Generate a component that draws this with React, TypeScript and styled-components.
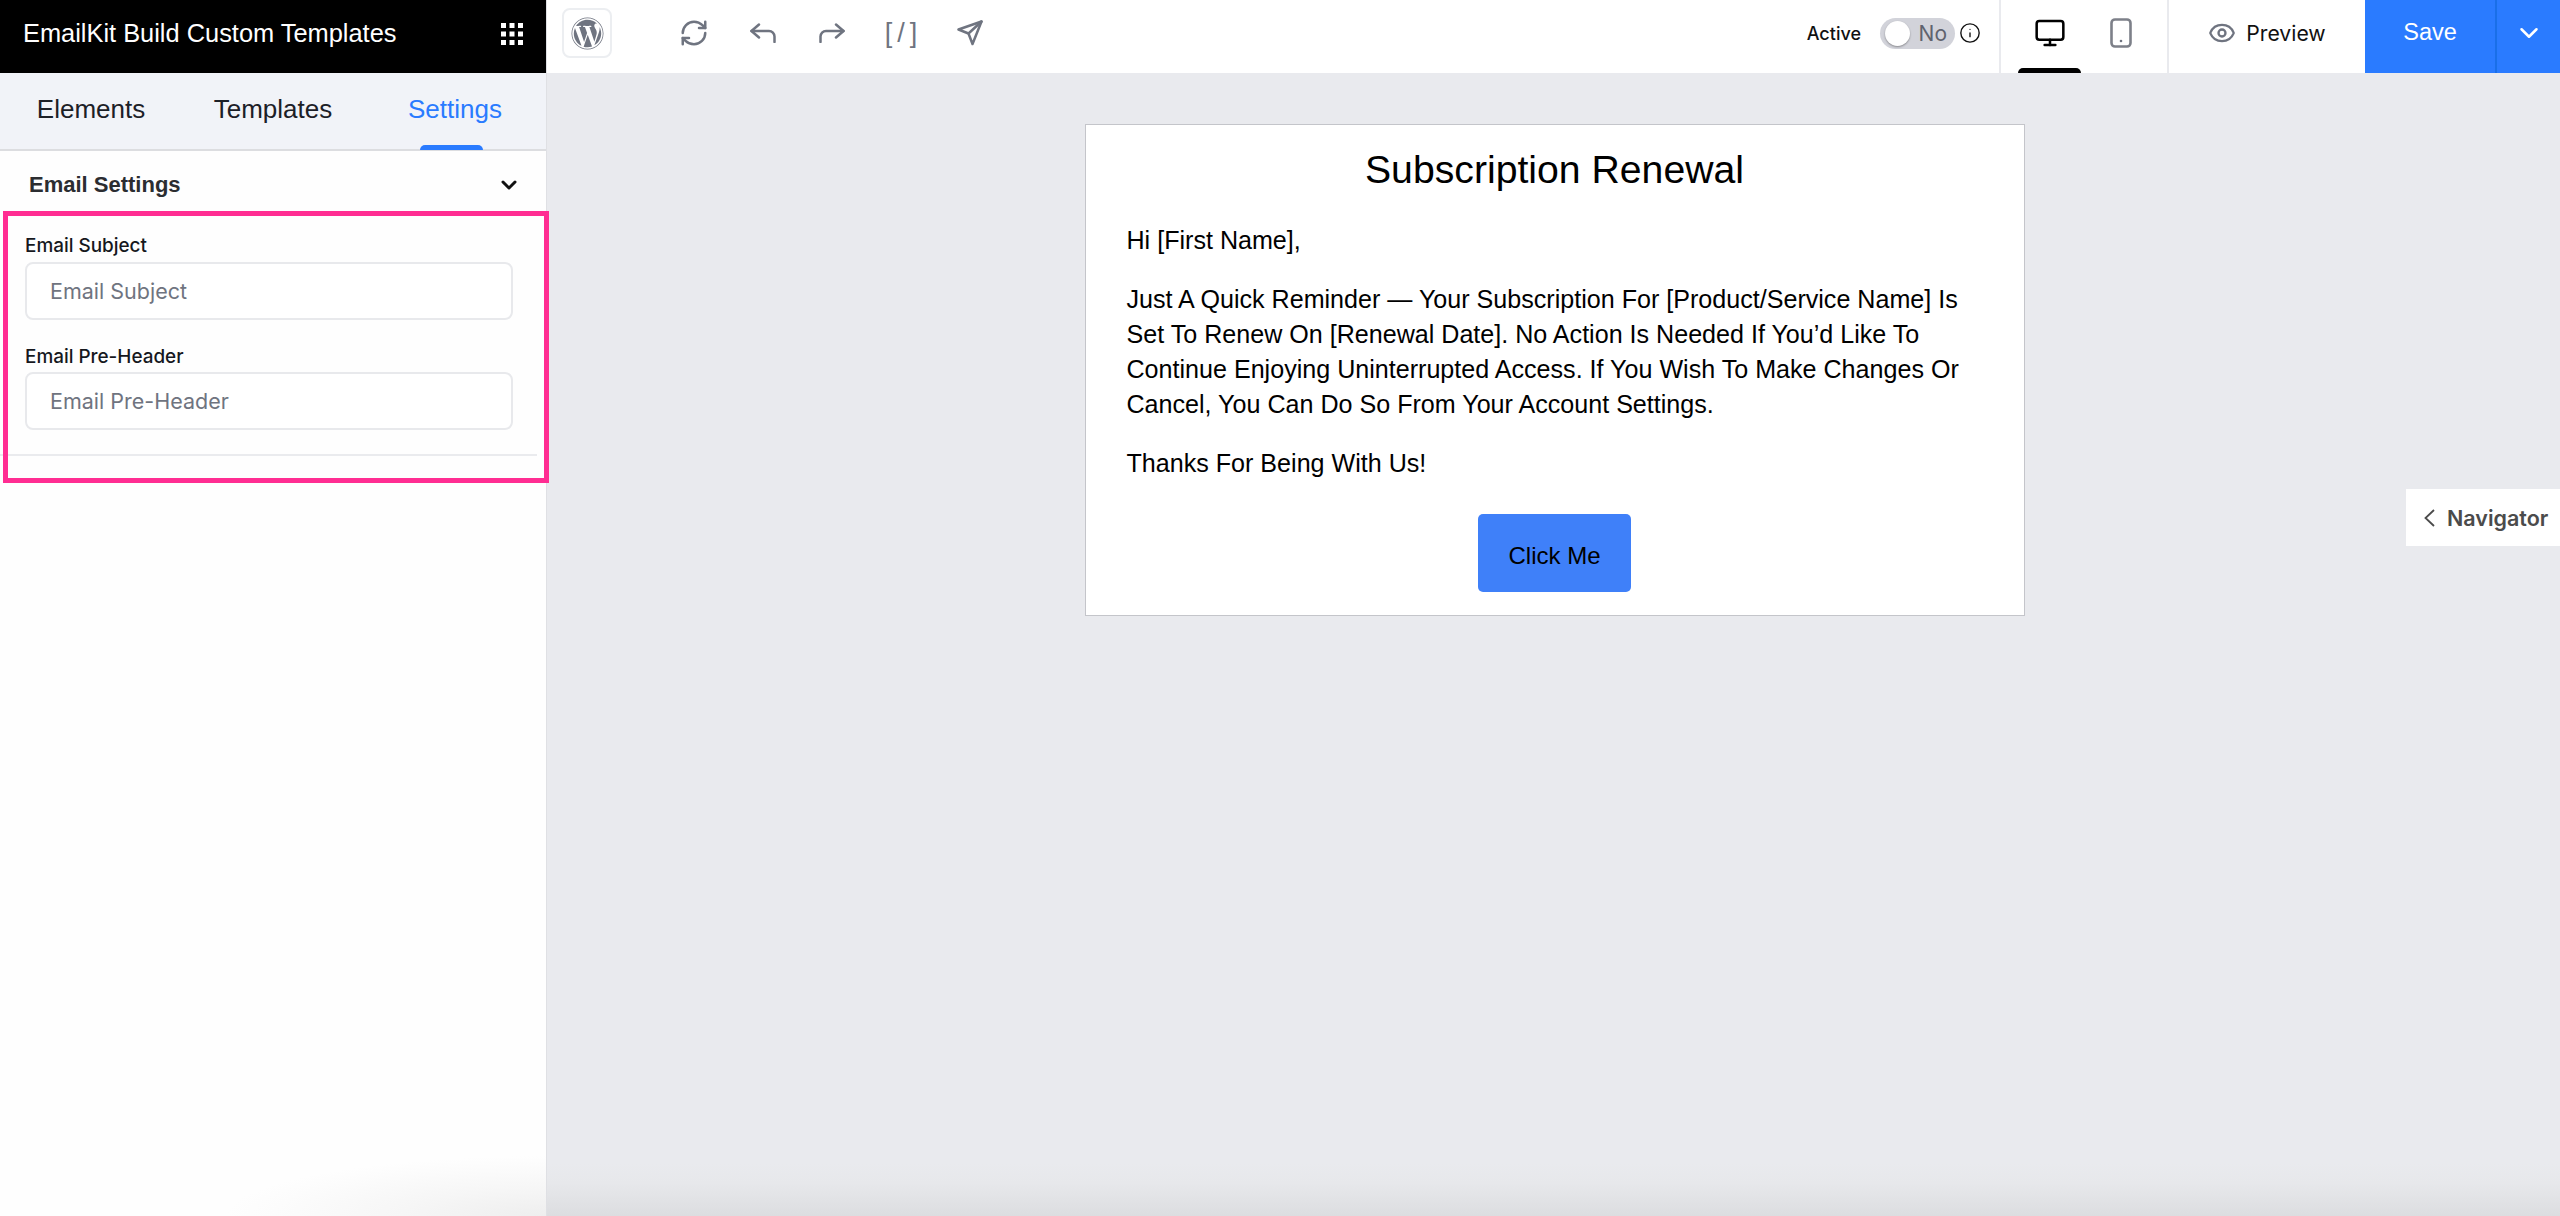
import styled, { createGlobalStyle } from "styled-components";
import { ChevronDown, Eye, Info, Monitor, RefreshCw } from "lucide-react";
import { FaWordpress } from "react-icons/fa";

const GlobalStyle = createGlobalStyle`
  html, body {
    margin: 0;
    padding: 0;
    height: 100%;
    background: #e9eaee;
  }
  * {
    box-sizing: border-box;
  }
`;

const helvetica = `"Liberation Sans", Arial, sans-serif`;
const inter = `Inter, "Liberation Sans", sans-serif`;

const Page = styled.div`
  display: flex;
  width: 2560px;
  height: 1216px;
  overflow: hidden;
  font-family: ${helvetica};
`;

const Sidebar = styled.aside`
  position: relative;
  flex: 0 0 546px;
  display: flex;
  flex-direction: column;
  border-right: 1px solid #dfe0e4;
  background: radial-gradient(
      ellipse 320px 60px at 100% 100%,
      #eeeeee 0%,
      #f6f6f6 45%,
      #fcfcfc 85%,
      #fefefe 100%
    ),
    #fefefe;
`;

const BrandBar = styled.div`
  flex: 0 0 73px;
  display: flex;
  align-items: center;
  justify-content: space-between;
  padding: 0 23px 6px 23px;
  background: #000;
  color: #fff;
  font-size: 25.4px;
`;

const Tabs = styled.nav`
  flex: 0 0 76px;
  display: flex;
  align-items: center;
  padding-bottom: 4px;
  background: #f1f3f8;
  border-bottom: 2px solid #dcdde0;
`;

const Tab = styled.div<{ $active?: boolean; $width: number }>`
  position: relative;
  flex: 0 0 ${(p) => p.$width}px;
  font-size: 26px;
  line-height: 72px;
  text-align: center;
  color: ${(p) => (p.$active ? "#2a7bff" : "#1c2027")};

  ${(p) =>
    p.$active &&
    `
    &::after {
      content: "";
      position: absolute;
      left: 50%;
      bottom: -5px;
      width: 63px;
      height: 5px;
      margin-left: -35px;
      border-radius: 5px 5px 0 0;
      background: #2a7bff;
    }
  `}
`;

const SectionHead = styled.div`
  flex: 0 0 63px;
  display: flex;
  align-items: center;
  justify-content: space-between;
  padding: 5px 25px 0 29px;
  font-size: 22px;
  font-weight: 700;
  color: #2b2d31;
`;

const SectionBody = styled.div`
  display: flex;
  flex-direction: column;
  width: 537px;
  padding: 21px 24px 24px 25px;
  border-bottom: 2px solid #eaebee;
`;

const FieldLabel = styled.label`
  margin-bottom: 4.5px;
  font-family: ${inter};
  font-size: 18.9px;
  font-weight: 500;
  line-height: 22px;
  color: #16181d;
`;

const FieldInput = styled.input<{ $gap?: boolean }>`
  width: 488px;
  height: 58px;
  padding: 0 23px;
  margin-bottom: ${(p) => (p.$gap ? "26px" : "0")};
  border: 2px solid #e8e9ec;
  border-radius: 8px;
  outline: none;
  background: #fff;
  font-family: ${inter};
  font-size: 21.5px;

  &::placeholder {
    color: #6f7480;
    opacity: 1;
  }
`;

// pink annotation drawn over the screenshot
const Highlight = styled.div`
  position: absolute;
  top: 211px;
  left: 3px;
  width: 546px;
  height: 272px;
  border: 5px solid #ff2d92;
  z-index: 2;
  pointer-events: none;
`;

const Workspace = styled.div`
  flex: 1;
  min-width: 0;
  display: flex;
  flex-direction: column;
`;

const TopBar = styled.header`
  flex: 0 0 73px;
  display: flex;
  align-items: stretch;
  justify-content: space-between;
  background: #fff;
  color: #6f7480;
`;

const LeftTools = styled.div`
  display: flex;
  align-items: center;
  padding: 0 0 0 15px;
`;

const LogoBox = styled.div`
  display: flex;
  align-items: center;
  justify-content: center;
  width: 50px;
  height: 50px;
  margin: 0 62px 7px 0;
  border: 2px solid #eceef1;
  border-radius: 8px;
`;

const ToolButton = styled.div`
  display: flex;
  align-items: center;
  justify-content: center;
  width: 40px;
  height: 40px;
  margin: 0 29px 7px 0;
`;

const ToolText = styled.span`
  font-family: ${helvetica};
  font-size: 27px;
  letter-spacing: 5px;
  margin-right: -5px;
  white-space: nowrap;
`;

const RightTools = styled.div`
  display: flex;
  align-items: stretch;
`;

const StatusGroup = styled.div`
  display: flex;
  align-items: center;
  padding: 0 18px 7px 0;
  font-family: ${inter};
  color: #111;
`;

const StatusLabel = styled.span`
  margin-right: 19px;
  font-size: 18px;
  font-weight: 500;
`;

const Toggle = styled.div`
  position: relative;
  display: flex;
  align-items: center;
  justify-content: flex-end;
  width: 75px;
  height: 31px;
  margin-right: 4px;
  padding-right: 8px;
  border-radius: 16px;
  background: #d2d3da;
  font-size: 21px;
  color: #60636e;

  &::before {
    content: "";
    position: absolute;
    top: 3px;
    left: 5px;
    width: 25px;
    height: 25px;
    border-radius: 50%;
    background: #fff;
    box-shadow: 0 1px 2px rgba(0, 0, 0, 0.35);
  }
`;

const DeviceGroup = styled.div`
  display: flex;
  gap: 8px;
  padding-left: 17px;
  width: 170px;
  border-left: 2px solid #e9eaee;
  border-right: 2px solid #e9eaee;
`;

const DeviceTab = styled.div<{ $active?: boolean }>`
  position: relative;
  display: flex;
  align-items: center;
  justify-content: center;
  width: 63px;
  padding-bottom: 7px;

  ${(p) =>
    p.$active &&
    `
    &::after {
      content: "";
      position: absolute;
      left: 0;
      bottom: 0;
      width: 63px;
      height: 5px;
      border-radius: 5px 5px 0 0;
      background: #000;
    }
  `}
`;

const PreviewButton = styled.div`
  display: flex;
  align-items: center;
  justify-content: center;
  gap: 10px;
  width: 196px;
  padding-bottom: 7px;
  font-family: ${inter};
  font-size: 21.2px;
  font-weight: 400;
  color: #111;
`;

const SaveButton = styled.div`
  display: flex;
  align-items: center;
  justify-content: center;
  width: 130px;
  padding-bottom: 8px;
  background: #2a7bff;
  color: #fff;
  font-size: 23.5px;
  font-weight: 500;
`;

const SaveMenu = styled.div`
  display: flex;
  align-items: center;
  justify-content: center;
  width: 65px;
  padding-bottom: 7px;
  background: #2a7bff;
  border-left: 2px solid #1a6fe8;
  color: #fff;
`;

const Canvas = styled.main`
  position: relative;
  flex: 1;
  display: flex;
  justify-content: center;
  align-items: flex-start;
  padding: 51px 0 0 2px;
  background: linear-gradient(to bottom, #e9eaee 1090px, #e7e8eb 1110px, #dcdde0 1143px);
`;

const EmailCard = styled.article`
  display: flex;
  flex-direction: column;
  width: 940px;
  height: 492px;
  padding: 19px 41px 0;
  background: #fff;
  border: 1px solid #c4c5ca;
  color: #000;
`;

const EmailTitle = styled.h1`
  margin: 0 0 27px;
  font-size: 39.2px;
  font-weight: 400;
  line-height: 52px;
  text-align: center;
`;

const EmailText = styled.p`
  margin: 0 0 24.5px;
  font-size: 25.1px;
  line-height: 34.8px;
`;

const EmailButton = styled.div`
  align-self: center;
  display: flex;
  align-items: center;
  justify-content: center;
  width: 153px;
  height: 78px;
  margin-top: 9px;
  padding-top: 6px;
  border-radius: 5px;
  background: #3f80f9;
  font-size: 24px;
`;

const NavigatorTab = styled.div`
  position: absolute;
  top: 416px;
  right: 0;
  display: flex;
  align-items: center;
  gap: 12px;
  width: 154px;
  height: 57px;
  padding-left: 17px;
  background: #fff;
  font-family: ${inter};
  font-size: 21.5px;
  font-weight: 600;
  color: #4b4b4b;
`;

const AppsIcon = () => (
  <svg width="22" height="22" viewBox="0 0 22 22" fill="#fff">
    {[0, 8.5, 17].map((y) =>
      [0, 8.5, 17].map((x) => (
        <rect key={`${x}-${y}`} x={x} y={y} width="5" height="5" />
      ))
    )}
  </svg>
);

const UndoIcon = ({ $flip }: { $flip?: boolean }) => (
  <svg width="26" height="20" viewBox="0 0 26 20" fill="none" stroke="#6f7480" strokeWidth="2.5" strokeLinecap="round" strokeLinejoin="round">
    <g transform={$flip ? "matrix(-1 0 0 1 26 0)" : undefined}>
      <path d="M9 1.5 1.5 8 9 14.5" />
      <path d="M1.5 8H19a5.5 5.5 0 0 1 5.5 5.5V19" />
    </g>
  </svg>
);

const SendIcon = () => (
  <svg width="26" height="26" viewBox="0 0 26 26" fill="none" stroke="#6f7480" strokeWidth="2.5" strokeLinejoin="round" strokeLinecap="round">
    <path d="M24.5 1.5 1.5 9.5l10 4 4 10.5z" />
    <path d="M11.5 13.5 24.5 1.5" />
  </svg>
);

const PhoneIcon = () => (
  <svg width="22" height="30" viewBox="0 0 22 30" fill="none">
    <rect x="1.5" y="1.5" width="19" height="27" rx="3.5" stroke="#7d8089" strokeWidth="2.6" />
    <circle cx="11" cy="23" r="1.3" fill="#6f7480" />
  </svg>
);

const SmallChevronLeft = () => (
  <svg width="12" height="18" viewBox="0 0 12 18" fill="none" stroke="#4b4b4b" strokeWidth="1.8">
    <path d="M11 1 2.5 9l8.5 8" />
  </svg>
);

export default function App() {
  return (
    <Page>
      <GlobalStyle />
      <Sidebar>
        <BrandBar>
          <span>EmailKit Build Custom Templates</span>
          <AppsIcon />
        </BrandBar>
        <Tabs>
          <Tab $width={182}>Elements</Tab>
          <Tab $width={182}>Templates</Tab>
          <Tab $width={182} $active>
            Settings
          </Tab>
        </Tabs>
        <SectionHead>
          <span>Email Settings</span>
          <ChevronDown size={24} strokeWidth={3} color="#111" />
        </SectionHead>
        <SectionBody>
          <FieldLabel>Email Subject</FieldLabel>
          <FieldInput $gap placeholder="Email Subject" />
          <FieldLabel>Email Pre-Header</FieldLabel>
          <FieldInput placeholder="Email Pre-Header" />
        </SectionBody>
        <Highlight />
      </Sidebar>
      <Workspace>
        <TopBar>
          <LeftTools>
            <LogoBox>
              <FaWordpress size={33} color="#6f7480" />
            </LogoBox>
            <ToolButton>
              <RefreshCw size={30} strokeWidth={2} />
            </ToolButton>
            <ToolButton>
              <UndoIcon />
            </ToolButton>
            <ToolButton>
              <UndoIcon $flip />
            </ToolButton>
            <ToolButton>
              <ToolText>[/]</ToolText>
            </ToolButton>
            <ToolButton>
              <SendIcon />
            </ToolButton>
          </LeftTools>
          <RightTools>
            <StatusGroup>
              <StatusLabel>Active</StatusLabel>
              <Toggle>No</Toggle>
              <Info size={22} strokeWidth={1.5} />
            </StatusGroup>
            <DeviceGroup>
              <DeviceTab $active>
                <Monitor size={32} strokeWidth={1.9} color="#000" />
              </DeviceTab>
              <DeviceTab>
                <PhoneIcon />
              </DeviceTab>
            </DeviceGroup>
            <PreviewButton>
              <Eye size={28} strokeWidth={2} color="#6f7480" />
              <span>Preview</span>
            </PreviewButton>
            <SaveButton>Save</SaveButton>
            <SaveMenu>
              <ChevronDown size={30} strokeWidth={2} />
            </SaveMenu>
          </RightTools>
        </TopBar>
        <Canvas>
          <EmailCard>
            <EmailTitle>Subscription Renewal</EmailTitle>
            <EmailText>Hi [First Name],</EmailText>
            <EmailText>
              Just A Quick Reminder — Your Subscription For [Product/Service Name] Is Set To Renew On [Renewal Date]. No
              Action Is Needed If You’d Like To Continue Enjoying Uninterrupted Access. If You Wish To Make Changes Or
              Cancel, You Can Do So From Your Account Settings.
            </EmailText>
            <EmailText>Thanks For Being With Us!</EmailText>
            <EmailButton>Click Me</EmailButton>
          </EmailCard>
          <NavigatorTab>
            <SmallChevronLeft />
            <span>Navigator</span>
          </NavigatorTab>
        </Canvas>
      </Workspace>
    </Page>
  );
}
